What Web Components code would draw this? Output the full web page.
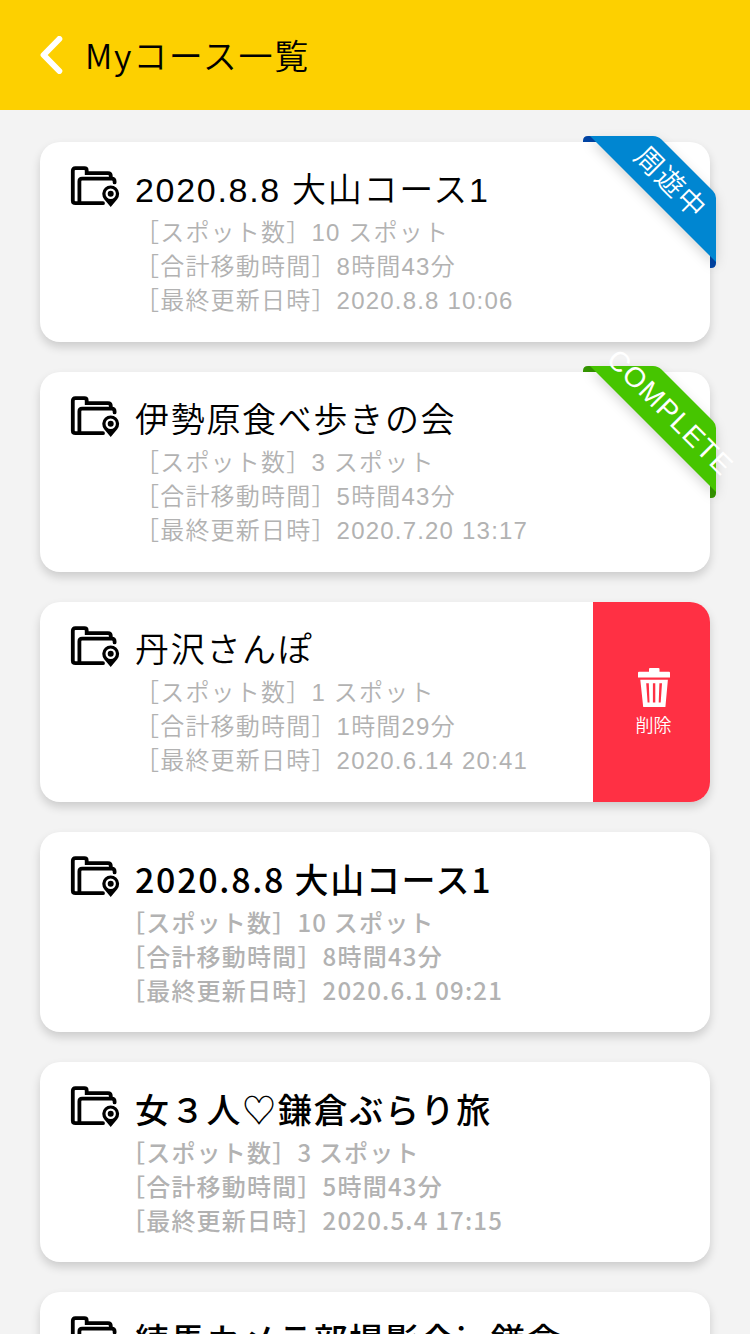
<!DOCTYPE html>
<html lang="ja">
<head>
<meta charset="utf-8">
<meta name="viewport" content="width=device-width, initial-scale=1">
<title>Myコース一覧</title>
<style>
  body {
    margin: 0;
    background: #f3f3f3;
    color: #000;
    font-family: "Liberation Sans", "Noto Sans CJK JP", sans-serif;
  }
</style>
</head>
<body>
<course-app>
  <app-header slot="header">Myコース一覧</app-header>

  <course-card>
    <span slot="title">2020.8.8 大山コース1</span>
    <li>［スポット数］10 スポット</li>
    <li>［合計移動時間］8時間43分</li>
    <li>［最終更新日時］2020.8.8 10:06</li>
    <corner-ribbon slot="overlay" tone="blue">周遊中</corner-ribbon>
  </course-card>

  <course-card>
    <span slot="title">伊勢原食べ歩きの会</span>
    <li>［スポット数］3 スポット</li>
    <li>［合計移動時間］5時間43分</li>
    <li>［最終更新日時］2020.7.20 13:17</li>
    <corner-ribbon slot="overlay" tone="green">COMPLETE</corner-ribbon>
  </course-card>

  <course-card>
    <span slot="title">丹沢さんぽ</span>
    <li>［スポット数］1 スポット</li>
    <li>［合計移動時間］1時間29分</li>
    <li>［最終更新日時］2020.6.14 20:41</li>
    <delete-action slot="action">削除</delete-action>
  </course-card>

  <course-card variant="plain">
    <span slot="title">2020.8.8 大山コース1</span>
    <li>［スポット数］10 スポット</li>
    <li>［合計移動時間］8時間43分</li>
    <li>［最終更新日時］2020.6.1 09:21</li>
  </course-card>

  <course-card variant="plain">
    <span slot="title">女３人♡鎌倉ぶらり旅</span>
    <li>［スポット数］3 スポット</li>
    <li>［合計移動時間］5時間43分</li>
    <li>［最終更新日時］2020.5.4 17:15</li>
  </course-card>

  <course-card variant="plain">
    <span slot="title">練馬カメラ部撮影会in鎌倉</span>
  </course-card>
</course-app>

<script>
class BaseElement extends HTMLElement {
  constructor() {
    super();
    const template = document.createElement('template');
    template.innerHTML = this.constructor.markup;
    this.attachShadow({ mode: 'open' }).append(template.content.cloneNode(true));
  }
}

class CourseApp extends BaseElement {
  static markup = `
    <style>
      :host { display: flex; flex-direction: column; height: 100vh; }
      main {
        flex: 1; min-height: 0; overflow-y: auto; scrollbar-width: none;
        display: flex; flex-direction: column; gap: 30px;
        padding: 32px 40px; box-sizing: border-box;
      }
    </style>
    <slot name="header"></slot>
    <main><slot></slot></main>`;
}

class AppHeader extends BaseElement {
  static markup = `
    <style>
      :host { display: block; flex: none; background: #fdd000; }
      header { display: flex; align-items: center; gap: 22px; height: 110px; padding: 0 40px; }
      a { display: block; width: 23px; height: 38px; }
      svg { display: block; }
      h1 {
        margin: 0; font-size: 34px; line-height: 48px; font-weight: 350;
        letter-spacing: 0.05em; font-family: "Noto Sans CJK JP", sans-serif;
      }
    </style>
    <header>
      <a href="#" aria-label="戻る">
        <svg width="23" height="38" viewBox="0 0 23 38" fill="none" stroke="#fff" stroke-width="6" stroke-linecap="round" stroke-linejoin="round"><path d="M19.3 3 3.6 19 19.3 35"/></svg>
      </a>
      <h1><slot></slot></h1>
    </header>`;
}

class CourseCard extends BaseElement {
  static markup = `
    <style>
      :host {
        display: block; flex: none; position: relative;
        --indent: 0px; --title-line: 48px; --title-gap: 2px;
        --weight: 350;
      }
      :host([variant="plain"]) {
        --indent: -14px; --title-line: 46px; --title-gap: 3px;
        --weight: 500;
        font-family: "Noto Sans CJK JP", sans-serif;
      }
      article {
        display: flex; min-height: 200px; overflow: hidden;
        background: #fff; border-radius: 20px;
        box-shadow: 0 5px 10px rgba(0, 0, 0, .16);
      }
      .content {
        flex: 1; min-width: 0; box-sizing: border-box;
        display: grid; grid-template-columns: 50px 1fr; column-gap: 15px;
        align-content: start; padding: 24px 30px;
      }
      .icon { display: block; }
      h2 {
        margin: 0 0 var(--title-gap); font-size: 34px; line-height: var(--title-line);
        font-weight: var(--weight); letter-spacing: 0.05em; white-space: nowrap;
      }
      ul {
        grid-column: 2; list-style: none; padding: 0; margin: 0 0 0 var(--indent);
        color: #b2b2b2; font-size: 24px; line-height: 34px;
        font-weight: var(--weight); letter-spacing: 0.05em; white-space: nowrap;
      }
    </style>
    <article>
      <div class="content">
        <svg class="icon" width="50" height="42" viewBox="0 0 50 42" aria-hidden="true">
          <g fill="none" stroke="#000" stroke-width="3.8" stroke-linecap="round">
            <path d="M33 37.2H5.5Q2.8 37.2 2.8 34.5V4.7Q2.8 2.1 5.4 2.1H14.4Q16.7 2.1 16.7 4.4V7.2H38Q40.8 7.2 40.8 10V11.4"/>
            <path d="M9.4 36.4V15.2Q9.4 12.6 12 12.6H41.8Q44.6 12.6 44.6 15.4V16.4"/>
          </g>
          <path fill-rule="evenodd" d="M40.7 41 34.2 33.2A8.4 8.4 0 1 1 47.2 33.2ZM40.7 22.5a5.2 5.2 0 1 0 0 10.4 5.2 5.2 0 1 0 0-10.4Z"/>
          <circle cx="40.7" cy="27.7" r="3"/>
        </svg>
        <h2><slot name="title"></slot></h2>
        <ul><slot></slot></ul>
      </div>
      <slot name="action"></slot>
    </article>
    <slot name="overlay"></slot>`;
}

class CornerRibbon extends BaseElement {
  static markup = `
    <style>
      :host {
        display: block; position: absolute; top: -6px; right: -6px;
        width: 133px; height: 132px; color: #fff;
        --band: #0086d1; --fold: #0044a4;
      }
      :host([tone="green"]) { --band: #46c500; --fold: #349500; }
      svg { display: block; overflow: visible; }
      .fold { fill: var(--fold); }
      .band { fill: var(--band); filter: drop-shadow(0 5px 6px rgba(0, 0, 0, .16)); }
      span {
        position: absolute; left: 87px; top: 47px;
        transform: translate(-50%, -50%) rotate(45deg);
        font-size: 28px; line-height: 40px; font-weight: 350;
        letter-spacing: 0.05em; white-space: nowrap;
      }
    </style>
    <svg width="133" height="132" viewBox="0 0 133 132" aria-hidden="true">
      <path class="fold" d="M0 6V5Q0 0 5 0H14V6ZM127 118H133V127Q133 132 128 132H127Z"/>
      <path class="band" d="M7 0H70Q75 0 78.5 3.5L130 55Q133 58 133 62V126Z"/>
    </svg>
    <span><slot></slot></span>`;
}

class DeleteAction extends BaseElement {
  static markup = `
    <style>
      :host { display: flex; flex: none; width: 117px; }
      button {
        flex: 1; display: flex; flex-direction: column; align-items: center; justify-content: center; gap: 7px;
        border: 0; margin: 0; padding: 2px 0 0 4px; background: #ff3044; color: #fff;
        font: inherit; font-size: 18px; line-height: 24px; font-weight: 350;
      }
      svg { display: block; }
    </style>
    <button type="button">
      <svg width="32" height="39" viewBox="0 0 32 39" aria-hidden="true">
        <path fill="#fff" fill-rule="evenodd" d="M12.5 0H20.5Q21.5 0 21.5 1V3.8H31Q32 3.8 32 4.8V9.5H0V4.8Q0 3.8 1 3.8H11V1Q11 0 12 0ZM2.3 11.7H29.9L27.4 39H5.2ZM8.2 15.2 9.6 34.6H11.5L10.8 15.2ZM14.9 15.2V34.6H17.3V15.2ZM21.4 15.2 20.7 34.6H22.7L24 15.2Z"/>
      </svg>
      <slot></slot>
    </button>`;
}

customElements.define('course-app', CourseApp);
customElements.define('app-header', AppHeader);
customElements.define('course-card', CourseCard);
customElements.define('corner-ribbon', CornerRibbon);
customElements.define('delete-action', DeleteAction);
</script>
</body>
</html>
